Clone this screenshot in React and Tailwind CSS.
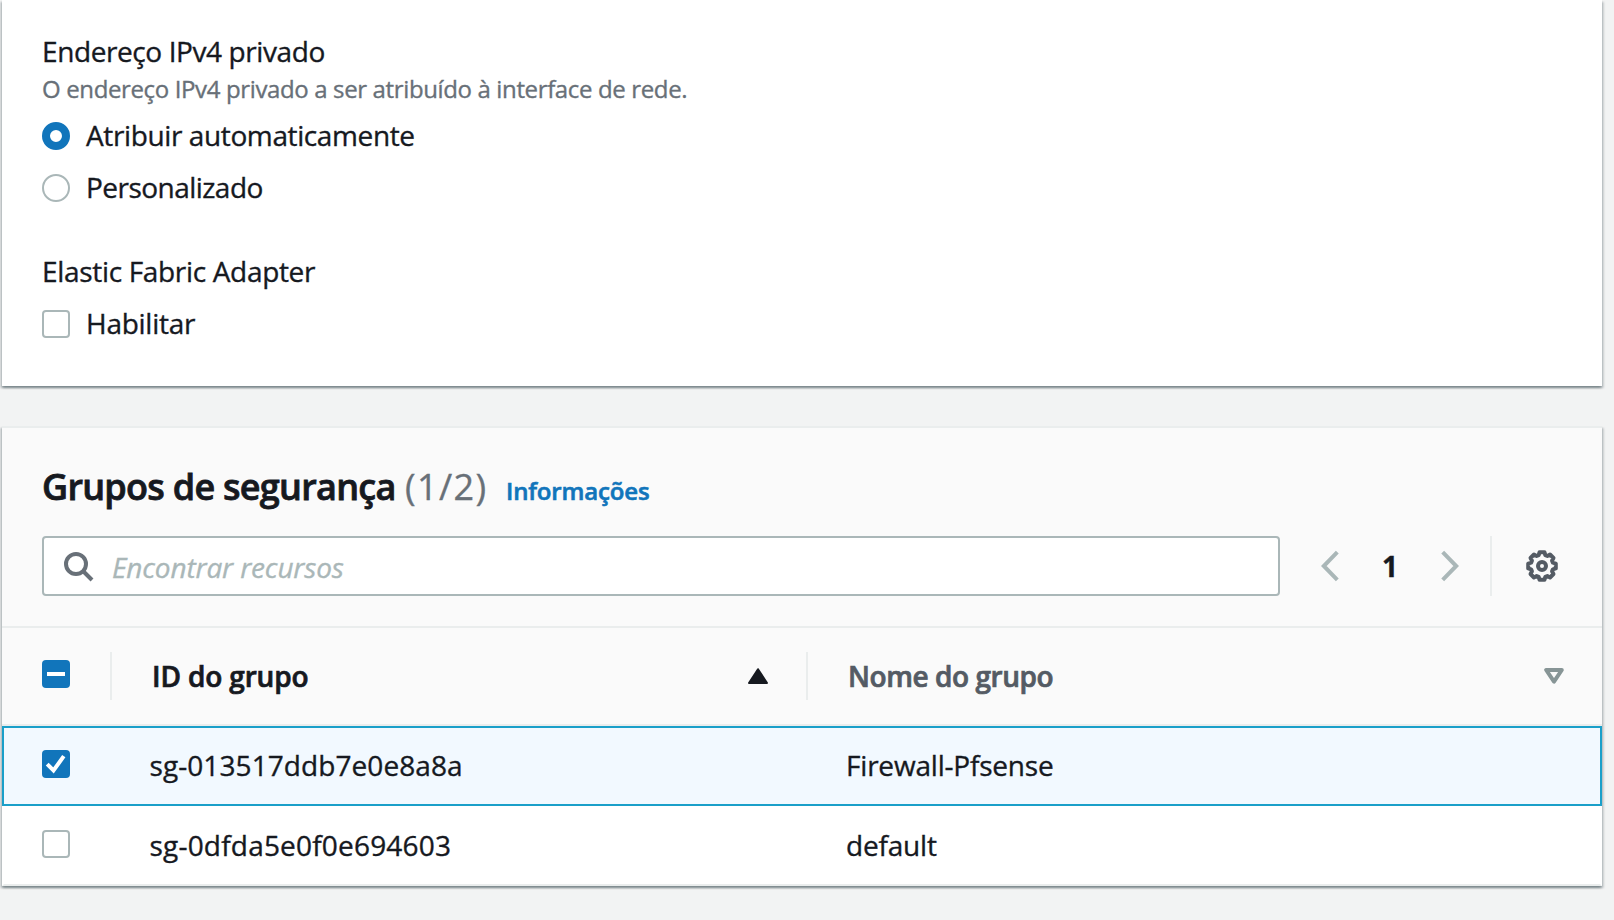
const gearPoints = Array.from({ length: 8 }, (_, i) =>
  [[-17, 11.4], [-10, 14], [10, 14], [17, 11.4]].map(([offset, r]) => {
    const a = ((i * 45 + offset) * Math.PI) / 180;
    return `${(16 + r * Math.sin(a)).toFixed(2)},${(16 - r * Math.cos(a)).toFixed(2)}`;
  }).join(" ")
).join(" ");

function Gear() {
  return (
    <svg className="size-8 text-[#545b64]" viewBox="0 0 32 32" fill="none" stroke="currentColor" strokeWidth="4">
      <polygon points={gearPoints} strokeLinejoin="round" />
      <circle cx="16" cy="16" r="4" />
    </svg>
  );
}

function SearchIcon() {
  return (
    <svg className="size-[30px] shrink-0 text-[#687078]" viewBox="0 0 30 30" fill="none" stroke="currentColor" strokeWidth="4">
      <circle cx="12" cy="12" r="10" />
      <path d="M19 19l9 9" />
    </svg>
  );
}

function Chevron({ flip }) {
  return (
    <svg className={flip ? "h-8 w-[18px] -scale-x-100" : "h-8 w-[18px]"} viewBox="0 0 18 32" fill="none" stroke="#aab7b8" strokeWidth="4">
      <path d="M16.3 2.2L2.8 16l13.5 13.8" />
    </svg>
  );
}

function Checkbox({ state }) {
  if (!state) return <span className="size-7 shrink-0 rounded-[4px] border-2 border-[#aab7b8] bg-white" />;
  return (
    <span className="size-7 shrink-0 rounded-[4px] bg-[#1175bb]">
      <svg className="size-7" viewBox="0 0 28 28" fill="none" stroke="#fff" strokeWidth="4">
        {state === "mixed" ? <path d="M5 14h18" /> : <path d="M5.2 14.2l6.3 6.3L21.8 6.2" />}
      </svg>
    </span>
  );
}

function Radio({ checked }) {
  return checked ? (
    <span className="size-7 shrink-0 rounded-full border-[8px] border-[#1175bb] bg-white" />
  ) : (
    <span className="size-7 shrink-0 rounded-full border-2 border-[#aab7b8] bg-white" />
  );
}

function Choice({ control, className, children }) {
  return (
    <label className="flex h-11 items-center">
      <span className="mt-[2px] flex">{control}</span>
      <span className={`ml-4 leading-[44px] ${className}`}>{children}</span>
    </label>
  );
}

const cardShadow =
  "shadow-[0_2px_2px_0_rgba(0,28,36,0.3),2px_2px_2px_0_rgba(0,28,36,0.15),-2px_2px_2px_0_rgba(0,28,36,0.15)]";

const rows = [
  { id: "sg-013517ddb7e0e8a8a", idClass: "tracking-[0.076px]", name: "Firewall-Pfsense", nameClass: "tracking-[-0.196px]", selected: true },
  { id: "sg-0dfda5e0f0e694603", idClass: "tracking-[0.197px]", name: "default", nameClass: "tracking-[-0.179px]", selected: false },
];

export default function App() {
  return (
    <div className="flex h-[920px] w-[1614px] flex-col overflow-hidden bg-[#f2f3f3] pl-[2px] font-['Open_Sans','Noto_Sans',sans-serif] text-[28px] text-[#16191f] [-webkit-text-stroke:0.35px]">
      <section className={`h-[386px] w-[1600px] shrink-0 bg-white pl-10 pt-[29px] ${cardShadow}`}>
        <div className="leading-[44px] tracking-[-0.402px]">Endereço IPv4 privado</div>
        <div className="text-[24px] leading-[32px] tracking-[-0.365px] text-[#687078]">
          O endereço IPv4 privado a ser atribuído à interface de rede.
        </div>
        <div className="mt-2 flex flex-col gap-2">
          <Choice control={<Radio checked />} className="tracking-[-0.384px]">Atribuir automaticamente</Choice>
          <Choice control={<Radio />} className="tracking-[-0.532px]">Personalizado</Choice>
        </div>
        <div className="mt-10 leading-[44px] tracking-[-0.325px]">Elastic Fabric Adapter</div>
        <div className="mt-2">
          <Choice control={<Checkbox />} className="tracking-[-0.26px]">Habilitar</Choice>
        </div>
      </section>

      <section className={`mt-10 h-[460px] w-[1600px] shrink-0 border-t-2 border-[#eaeded] bg-white ${cardShadow}`}>
        <header className="h-[200px] border-b-2 border-[#eaeded] bg-[#fafafa] pl-10 pt-[37px]">
          <div className="flex h-11 items-baseline leading-[44px]">
            <h2 className="w-[363px] whitespace-nowrap text-[36px] font-semibold tracking-[-0.725px] [-webkit-text-stroke:0.8px]">Grupos de segurança</h2>
            <span className="w-[101px] text-[36px] tracking-[1.378px] text-[#687078]">(1/2)</span>
            <a className="text-[24px] font-semibold tracking-[-0.148px] text-[#1175bb] [-webkit-text-stroke:0.6px]">Informações</a>
          </div>
          <div className="mt-[27px] flex h-[60px] items-center">
            <div className="flex h-[60px] w-[1238px] items-center rounded-[4px] border-2 border-[#aab7b8] bg-white pl-5">
              <div className="mt-px flex"><SearchIcon /></div>
              <span className="ml-[18px] mt-[2px] italic leading-[44px] tracking-[-0.15px] text-[#aab7b8]">Encontrar recursos</span>
            </div>
            <div className="ml-[41px] flex items-center">
              <Chevron />
              <span className="ml-[43px] w-[59px] font-bold leading-[44px]">1</span>
              <Chevron flip />
            </div>
            <div className="ml-[31px] flex h-[60px] items-center border-l-2 border-[#eaeded] pl-[34px]">
              <Gear />
            </div>
          </div>
        </header>

        <div className="flex h-[98px] border-b-2 border-[#eaeded] bg-[#fafafa] pt-6 font-semibold leading-[44px] [-webkit-text-stroke:0.7px]">
          <div className="flex h-12 w-[110px] border-r-2 border-[#eaeded] pl-10 pt-2">
            <Checkbox state="mixed" />
          </div>
          <div className="flex h-12 w-[696px] justify-between border-r-2 border-[#eaeded] pl-[40px] pr-[38px] pt-[2px]">
            <span className="tracking-[-0.146px]">ID do grupo</span>
            <svg className="mt-[14px] h-4 w-5" viewBox="0 0 20 16" fill="#16191f" stroke="#16191f" strokeWidth="2" strokeLinejoin="round">
              <path d="M10 1.2L19 15H1z" />
            </svg>
          </div>
          <div className="flex h-12 flex-1 justify-between pl-[40px] pr-[38px] pt-[2px]">
            <span className="tracking-[-0.438px] text-[#545b64]">Nome do grupo</span>
            <svg className="mt-[14px] h-4 w-5" viewBox="0 0 20 16" fill="none" stroke="#879596" strokeWidth="4" strokeLinejoin="round">
              <path d="M2.2 2h15.6L10 13.6z" />
            </svg>
          </div>
        </div>

        {rows.map((row) => (
          <div
            key={row.id}
            className={
              row.selected
                ? "flex h-20 border-2 border-[#1a9fc9] bg-[#f2f9ff]"
                : "flex h-20 border-x-2 border-t-2 border-b-2 border-x-transparent border-t-transparent border-b-[#eaeded]"
            }
          >
            <div className="flex w-[106px] pl-[38px] pt-[22px]">
              <Checkbox state={row.selected ? "checked" : undefined} />
            </div>
            <div className={`w-[696px] pl-[39.5px] pt-[15px] leading-[44px] ${row.idClass}`}>{row.id}</div>
            <div className={`pl-[40px] pt-[15px] leading-[44px] ${row.nameClass}`}>{row.name}</div>
          </div>
        ))}
      </section>
    </div>
  );
}
